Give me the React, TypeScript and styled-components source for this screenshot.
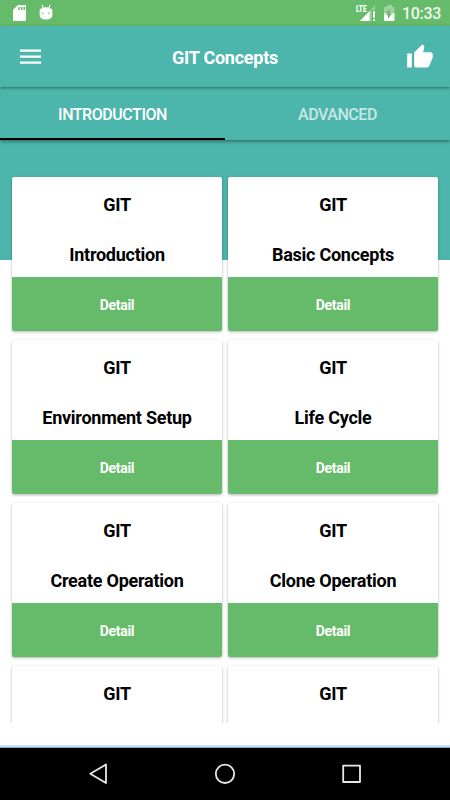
import React from "react";
import styled, { createGlobalStyle } from "styled-components";

const GlobalStyle = createGlobalStyle`
  * { box-sizing: border-box; }
  body { margin: 0; background: #fff; font-family: Roboto, sans-serif; }
  button { font-family: inherit; border: 0; padding: 0; background: none; }
`;

const TEAL = "#4db6ac";
const GREEN = "#66bb6a";

const Screen = styled.div`
  width: 450px;
  height: 800px;
  display: flex;
  flex-direction: column;
  overflow: hidden;
  background: #fff;
`;

const StatusBar = styled.header`
  height: 26px;
  flex: none;
  display: flex;
  justify-content: space-between;
  background: ${GREEN};
`;

const StatusIcons = styled.svg`
  display: block;
  height: 26px;
`;

const StatusRight = styled.div`
  display: flex;
`;

const Clock = styled.span`
  width: 48px;
  font-size: 16px;
  font-weight: 500;
  line-height: 28px;
  letter-spacing: -0.3px;
  color: #f0f8f0;
`;

const Toolbar = styled.div`
  height: 61px;
  flex: none;
  display: flex;
  align-items: center;
  justify-content: space-between;
  padding: 0 16px 0 19px;
  background: ${TEAL};
  box-shadow: 0 1px 3px rgba(0, 0, 0, 0.42);
  z-index: 2;
`;

const Title = styled.h1`
  margin: 3px 3px 0 0;
  font-size: 18px;
  font-weight: 700;
  line-height: 24px;
  letter-spacing: -0.25px;
  color: #fff;
`;

const IconButton = styled.button`
  display: flex;
  width: 28px;
  height: 28px;
`;

const Tabs = styled.nav`
  height: 53px;
  flex: none;
  display: grid;
  grid-template-columns: 1fr 1fr;
  background: ${TEAL};
  box-shadow: 0 1px 4px rgba(0, 0, 0, 0.5);
  z-index: 1;
`;

const Tab = styled.button<{ $active?: boolean }>`
  font-size: 16px;
  font-weight: 500;
  line-height: 20px;
  letter-spacing: -0.45px;
  padding-top: 4px;
  color: ${(p) => (p.$active ? "#fff" : "rgba(255, 255, 255, 0.7)")};
  border-bottom: 2px solid ${(p) => (p.$active ? "#0a0000" : "transparent")};
`;

const Content = styled.main`
  height: 583px;
  flex: none;
  overflow: hidden;
  padding: 37px 12px 0;
  background: linear-gradient(${TEAL} 120px, #fff 120px);
`;

const CardGrid = styled.div`
  display: grid;
  grid-template-columns: 210px 210px;
  gap: 9px 6px;
`;

const Card = styled.article<{ $clipped?: boolean }>`
  height: ${(p) => (p.$clipped ? 80 : 154)}px;
  display: flex;
  flex-direction: column;
  border-radius: 2px;
  background: #fff;
  box-shadow: 0 1px 3px rgba(0, 0, 0, 0.3);
`;

const CardText = styled.div`
  flex: 1;
  display: flex;
  flex-direction: column;
  gap: 26px;
  padding-top: 16px;
  text-align: center;
  font-size: 18px;
  font-weight: 700;
  line-height: 24px;
  letter-spacing: -0.25px;
  color: #000;
`;

const DetailButton = styled.button`
  height: 54px;
  padding-top: 2px;
  border-radius: 0 0 2px 2px;
  background: ${GREEN};
  color: #fff;
  font-size: 14px;
  font-weight: 700;
  letter-spacing: -0.3px;
`;

const Footer = styled.div`
  height: 25px;
  flex: none;
  background: linear-gradient(#fff 22px, #c4e2fa 22px);
  border-bottom: 1px solid #7fa5c2;
`;

const NavBar = styled.footer`
  flex: 1;
  display: flex;
  background: #000;
`;

const cards = [
  "Introduction",
  "Basic Concepts",
  "Environment Setup",
  "Life Cycle",
  "Create Operation",
  "Clone Operation",
];

const LeftStatus = () => (
  <StatusIcons width="60" viewBox="0 0 60 26" fill="#fff">
    <path
      fillRule="evenodd"
      d="M18 5H25q1 0 1 1v14q0 1-1 1H14q-1 0-1-1V9.800zM18.300 7v3h1.500V7zM21 7v3h1.500V7zM23.500 7v3H25V7z"
    />
    <path
      fillRule="evenodd"
      d="M42.300 4.200l1.300 3.300q2.500-.5 5 0l1.300-3.300.5.200-.5 3.800q2.500.2 2.500 2v4.500q0 4.800-6.400 4.800t-6.400-4.800v-4.500q0-1.800 2.700-2l-.5-3.800zM42.900 12.400a.8.800 0 1 0 0 1.600.8.800 0 0 0 0-1.600zM49 12.400a.8.800 0 1 0 0 1.600.8.800 0 0 0 0-1.600z"
    />
  </StatusIcons>
);

const RightStatus = () => (
  <StatusIcons width="48" viewBox="354 0 48 26">
    <text
      x="356"
      y="12"
      fill="#fff"
      fontFamily="Roboto"
      fontWeight="900"
      fontSize="9.500"
      textLength="10.500"
      lengthAdjust="spacingAndGlyphs"
    >
      LTE
    </text>
    <path d="M375 5.500V10h-3.500v11H360z" fill="#fff" opacity=".35" />
    <path d="M369.500 11V21H360z" fill="#fff" />
    <path d="M373.200 11h1.800v7h-1.800zM373.200 19.200h1.800V21h-1.800z" fill="#fff" />
    <path d="M387 5h5v2h2.500v7h-10.500V7h3z" fill="#fff" opacity=".35" />
    <path d="M384 13.500h10.500V20q0 1-1 1H385q-1 0-1-1z" fill="#fff" />
    <path d="M390 9v4.500h-4z" fill={GREEN} />
    <path d="M392 13.500l-4 5.500v-3.700h-1.800l1-1.800z" fill={GREEN} />
  </StatusIcons>
);

const App = () => (
  <>
    <GlobalStyle />
    <Screen>
      <StatusBar>
        <LeftStatus />
        <StatusRight>
          <RightStatus />
          <Clock>10:33</Clock>
        </StatusRight>
      </StatusBar>
      <Toolbar>
        <IconButton aria-label="Menu">
          <svg width="28" height="28" viewBox="0 0 28 28" fill="#fff">
            <path d="M1 6.400h21v2.400H1zM1 12.400h21v2.400H1zM1 18.400h21v2.400H1z" />
          </svg>
        </IconButton>
        <Title>GIT Concepts</Title>
        <IconButton aria-label="Like">
          <svg width="28" height="28" viewBox="0 0 24 24" fill="#fff">
            <path d="M1 21h4V9H1v12zm22-11c0-1.100-.9-2-2-2h-6.310l.95-4.570.03-.32c0-.41-.17-.79-.44-1.060L14.170 1 7.590 7.590C7.220 7.950 7 8.450 7 9v10c0 1.100.9 2 2 2h9c.83 0 1.540-.5 1.840-1.220l3.020-7.050c.09-.23.140-.47.140-.73v-2z" />
          </svg>
        </IconButton>
      </Toolbar>
      <Tabs>
        <Tab $active>INTRODUCTION</Tab>
        <Tab>ADVANCED</Tab>
      </Tabs>
      <Content>
        <CardGrid>
          {cards.map((name) => (
            <Card key={name}>
              <CardText>
                <span>GIT</span>
                <span>{name}</span>
              </CardText>
              <DetailButton>Detail</DetailButton>
            </Card>
          ))}
          <Card $clipped>
            <CardText>GIT</CardText>
          </Card>
          <Card $clipped>
            <CardText>GIT</CardText>
          </Card>
        </CardGrid>
      </Content>
      <Footer />
      <NavBar>
        <svg width="450" height="52" viewBox="0 748 450 52" fill="none" stroke="#e8e8e8" strokeWidth="1.800" strokeLinejoin="round">
          <path d="M106 764.500v18.500L90.300 773.800z" />
          <circle cx="225" cy="773.800" r="9.200" />
          <rect x="343.200" y="765.700" width="16.800" height="16.300" />
        </svg>
      </NavBar>
    </Screen>
  </>
);

export default App;
